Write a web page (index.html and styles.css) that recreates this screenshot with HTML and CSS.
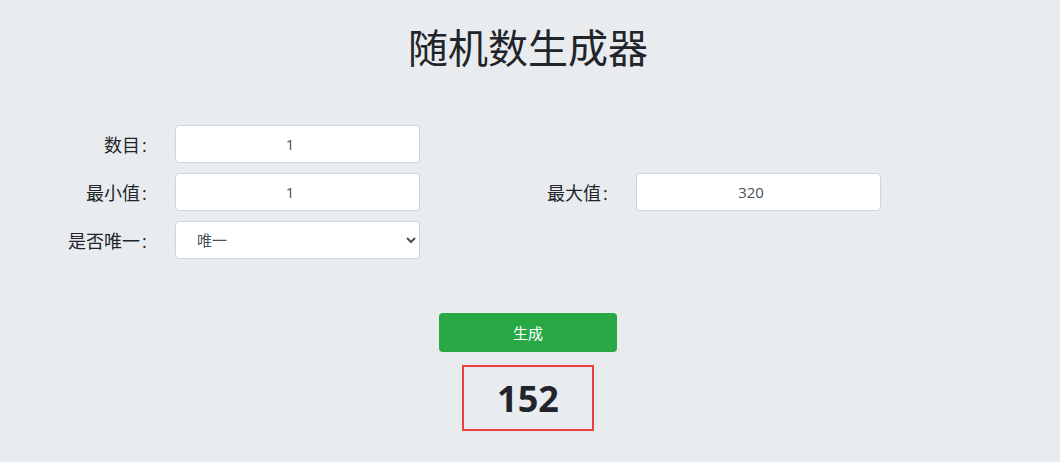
FILE: index.html
```html
<!DOCTYPE html>
<html lang="zh">
<head>
<meta charset="utf-8">
<title>随机数生成器</title>
<link rel="stylesheet" href="styles.css">
</head>
<body>
<h1 class="title">随机数生成器</h1>
<form class="form">
  <div class="field">
    <label class="label" for="count">数目<span class="colon">:</span></label>
    <input class="control" id="count" type="number" value="1">
  </div>
  <div class="field field-start">
    <label class="label" for="min">最小值<span class="colon">:</span></label>
    <input class="control" id="min" type="number" value="1">
  </div>
  <div class="field">
    <label class="label" for="max">最大值<span class="colon">:</span></label>
    <input class="control" id="max" type="number" value="320">
  </div>
  <div class="field field-start">
    <label class="label" for="unique">是否唯一<span class="colon">:</span></label>
    <select class="control select" id="unique">
      <option>唯一</option>
      <option>不唯一</option>
    </select>
  </div>
</form>
<div class="actions">
  <button class="btn" type="button">生成</button>
  <div class="result">152</div>
</div>
</body>
</html>
```
FILE: styles.css
```css
* { box-sizing: border-box; }
body {
  margin: 0;
  padding-right: 4px;
  background: #e9ecef;
  color: #212529;
  font-family: "Open Sans", "Noto Sans CJK SC", sans-serif;
  font-size: 16px;
}
.title {
  margin: 24px 0 0;
  font-size: 40px;
  line-height: 48px;
  font-weight: 400;
  text-align: center;
}
.form {
  display: grid;
  grid-template-columns: repeat(2, 372px);
  column-gap: 89px;
  row-gap: 10px;
  margin: 53px 0 0 48px;
}
.field {
  display: flex;
  align-items: center;
  gap: 17px;
}
.field-start { grid-column: 1; }
.label {
  width: 110px;
  text-align: right;
  font-size: 18px;
  color: #212529;
}
.colon {
  display: inline-block;
  width: 18px;
  padding-left: 2px;
  text-align: left;
}
.control {
  width: 245px;
  height: 38px;
  background: #fff;
  border: 1px solid #ced4da;
  border-radius: 4px;
  font-family: "Open Sans", "Noto Sans CJK SC", sans-serif;
  font-size: 15px;
  color: #495057;
  text-align: center;
  padding: 0 12px;
}
.select {
  text-align: left;
  padding-left: 17px;
}
.actions {
  display: flex;
  flex-direction: column;
  align-items: center;
  margin-top: 54px;
}
.btn {
  width: 178px;
  height: 39px;
  background: #28a745;
  border: none;
  border-radius: 4px;
  color: #fff;
  font-family: "Open Sans", "Noto Sans CJK SC", sans-serif;
  font-size: 15px;
}
.result {
  margin-top: 13px;
  width: 132px;
  height: 66px;
  border: 2px solid #e84141;
  display: flex;
  align-items: center;
  justify-content: center;
  font-size: 36px;
  font-weight: 700;
  color: #212529;
}
```
